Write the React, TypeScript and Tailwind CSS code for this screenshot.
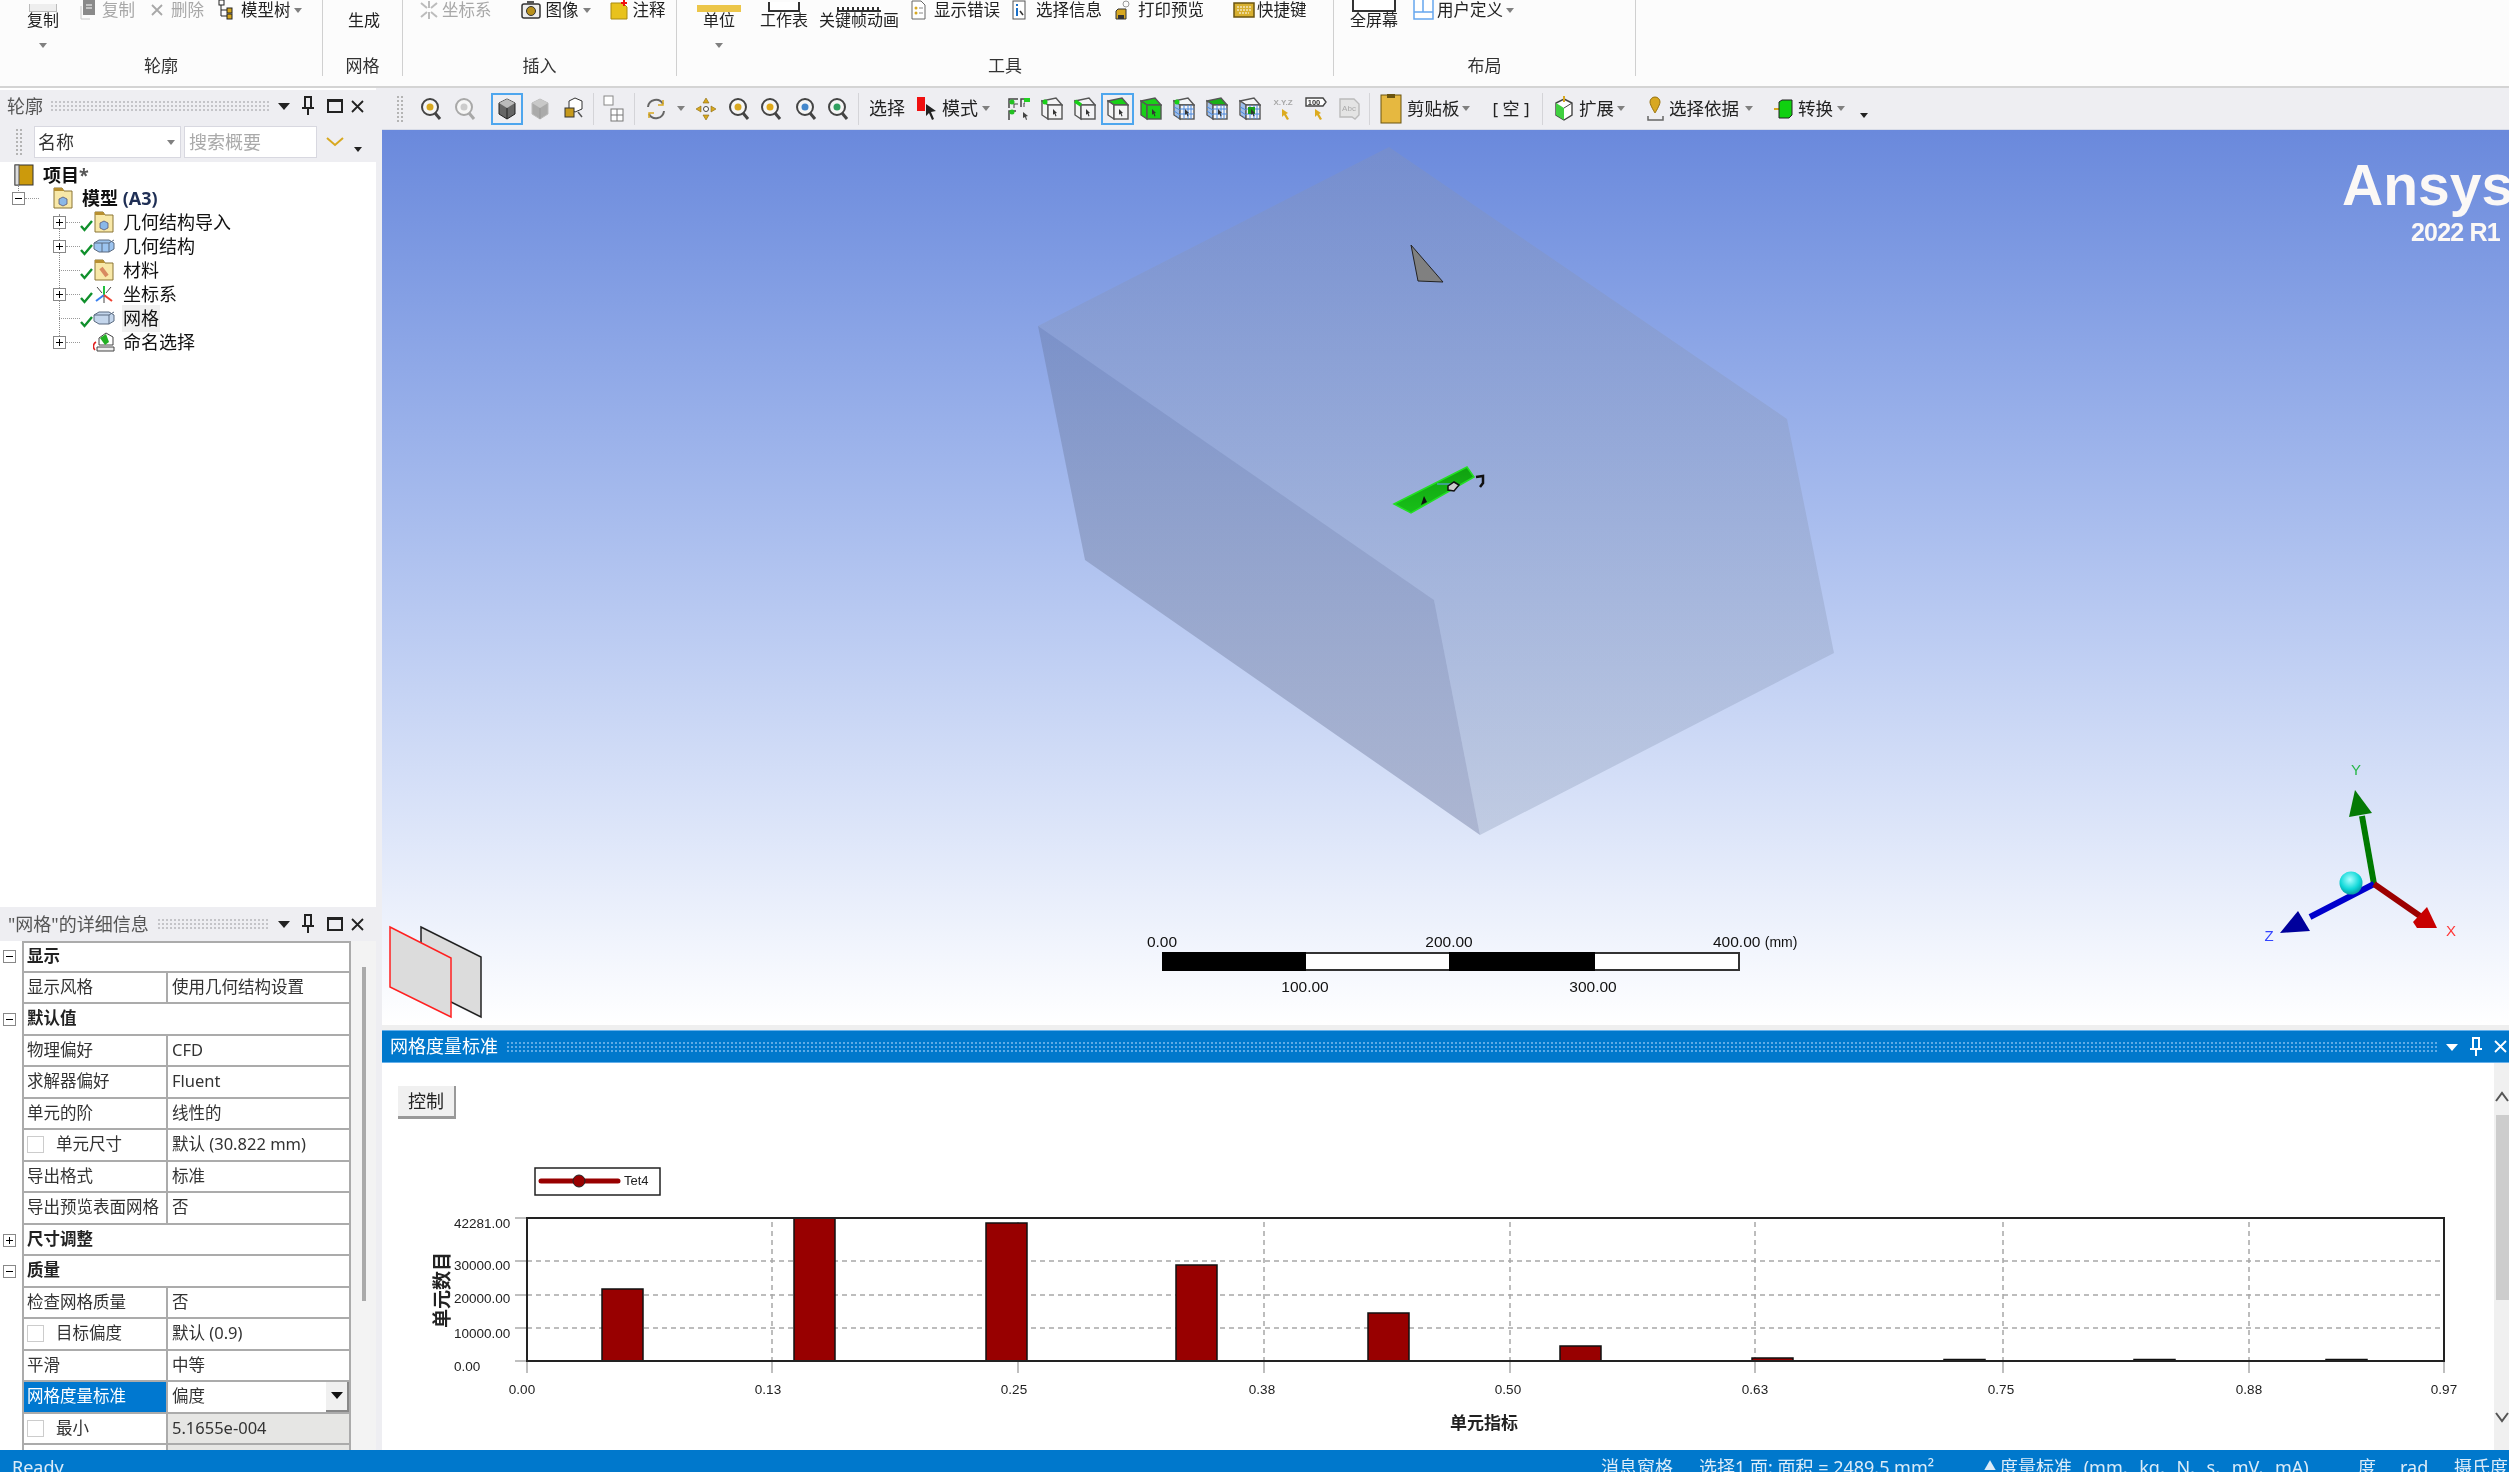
import type { ReactNode } from "react";

const Caret = ({ dark }: { dark?: boolean }) => (
  <span className={`inline-block h-0 w-0 border-x-[4px] border-t-[5px] border-x-transparent ${dark ? "border-t-[#222]" : "border-t-[#808080]"}`} />
);

function Svg({ w, h = 20, children }: { w: number; h?: number; children: ReactNode }) {
  return (
    <svg width={w} height={h} viewBox={`0 0 ${w} ${h}`} className="shrink-0">
      {children}
    </svg>
  );
}

// ribbon icons
const CopyIcon = () => (
  <Svg w={16}>
    <rect x="3" y="0" width="12" height="15" fill="#8a8a8a" />
    <path d="M1 6v13h9" fill="none" stroke="#c8c8c8" />
    <path d="M6 5h6M6 8h6" stroke="#fff" />
  </Svg>
);
const CrossIcon = ({ color = "#a8a8a8", size = 12 }: { color?: string; size?: number }) => (
  <Svg w={size} h={size}>
    <path d={`M1 1L${size - 1} ${size - 1}M${size - 1} 1L1 ${size - 1}`} stroke={color} strokeWidth="1.8" />
  </Svg>
);
const TreeIcon = () => (
  <Svg w={16}>
    <rect x="1" y="0" width="5" height="5" fill="#fff" stroke="#222" />
    <rect x="9" y="8" width="5" height="5" fill="#d6a71c" stroke="#222" />
    <rect x="9" y="14" width="5" height="5" fill="#d6a71c" stroke="#222" />
    <path d="M3 5v5h6M3 10v6h6" fill="none" stroke="#222" />
  </Svg>
);
const AxisIcon = () => (
  <Svg w={18}>
    <path d="M9 1v7M9 12v7M1 3l6 5M17 3l-6 5M1 17l6-5M17 17l-6-5" stroke="#bcbcbc" strokeWidth="2" />
  </Svg>
);
const CameraIcon = () => (
  <Svg w={20}>
    <rect x="1" y="4" width="18" height="14" rx="2" fill="#eee" stroke="#333" strokeWidth="1.5" />
    <circle cx="10" cy="11" r="4.5" fill="#b8901c" stroke="#333" />
    <rect x="6" y="1" width="7" height="3" fill="#555" />
  </Svg>
);
const NoteIcon = () => (
  <Svg w={20}>
    <path d="M2 3h12l4 4v12H2z" fill="#e8c21c" stroke="#a88a10" />
    <path d="M15 0v6M12 3h6" stroke="#f01010" strokeWidth="2" />
  </Svg>
);
const DocIcon = () => (
  <Svg w={15}>
    <path d="M1 1h9l4 4v14H1z" fill="#fff" stroke="#666" />
    <circle cx="5" cy="8" r="1.5" fill="#d8a820" />
    <circle cx="5" cy="13" r="1.5" fill="#d8a820" />
    <path d="M8 8h4M8 13h4" stroke="#888" />
  </Svg>
);
const InfoIcon = () => (
  <Svg w={14}>
    <rect x="1" y="1" width="12" height="18" fill="#fff" stroke="#555" />
    <rect x="4" y="4" width="2" height="2" fill="#1a70c8" />
    <rect x="4" y="8" width="2" height="8" fill="#1a70c8" />
    <path d="M8 11l3 4" stroke="#333" strokeWidth="1.5" />
  </Svg>
);
const PrintIcon = () => (
  <Svg w={16}>
    <circle cx="11" cy="4" r="3" fill="none" stroke="#999" />
    <path d="M3 9h8v10H1V11z" fill="#d8a820" stroke="#333" />
    <rect x="3" y="15" width="6" height="4" fill="#333" />
  </Svg>
);
const KeysIcon = () => (
  <Svg w={22}>
    <rect x="1" y="3" width="20" height="14" fill="#d8b030" stroke="#6a5410" strokeWidth="1.5" />
    <path d="M4 7h14M4 10h14M6 13h10" stroke="#fff" strokeDasharray="2 1" />
  </Svg>
);
const LayoutIcon = () => (
  <Svg w={21}>
    <path d="M1 0v19h19V0M1 12h19M10 0v12" fill="#fff" stroke="#66a6ee" strokeWidth="1.5" />
  </Svg>
);

// toolbar icons
const Glass = ({ dot = "#d8a820", faded }: { dot?: string; faded?: boolean }) => (
  <Svg w={22} h={24}>
    <circle cx="10" cy="10" r="8" fill="#f6f6f6" stroke={faded ? "#a8a8a8" : "#444"} strokeWidth="2" />
    <path d="M15 16l5 6" stroke={faded ? "#a8a8a8" : "#444"} strokeWidth="3" />
    <circle cx="10" cy="10" r="3.5" fill={dot} />
  </Svg>
);
const SolidCube = ({ light }: { light?: boolean }) => (
  <Svg w={20} h={24}>
    <path d="M10 2l8 4v11l-8 5-8-5V6z" fill={light ? "#aaa" : "#666"} stroke={light ? "#bbb" : "#222"} />
    <path d="M10 2l8 4-8 5-8-5z" fill={light ? "#c8c8c8" : "#bbb"} />
    <path d="M10 11v11" stroke={light ? "#999" : "#222"} />
  </Svg>
);
const MultiCube = () => (
  <Svg w={22} h={24}>
    <path d="M12 1l7 3v8l-7 3-6-3V4z" fill="#fff" stroke="#333" />
    <rect x="2" y="11" width="9" height="9" fill="#c79a1c" stroke="#333" />
    <path d="M15 15l4 5" stroke="#555" strokeWidth="1.5" />
  </Svg>
);
const SplitIcon = () => (
  <Svg w={22} h={28}>
    <rect x="1" y="1" width="9" height="9" fill="#fff" stroke="#888" />
    <rect x="8" y="14" width="12" height="12" fill="#fff" stroke="#777" />
    <path d="M14 14v12M8 20h12" stroke="#777" />
  </Svg>
);
const RotateIcon = () => (
  <Svg w={22} h={24}>
    <path d="M3 10a8 8 0 0 1 15-3M19 14a8 8 0 0 1-15 3" fill="none" stroke="#666" strokeWidth="2" />
    <path d="M18 3v5h-5M4 21v-5h5" fill="none" stroke="#d8a820" strokeWidth="1.5" />
  </Svg>
);
const PanIcon = () => (
  <Svg w={22} h={24}>
    <path d="M11 1l3 5H8zM11 23l-3-5h6zM1 12l5-3v6zM21 12l-5 3V9z" fill="#d8a820" stroke="#8a6a10" strokeWidth=".6" />
    <circle cx="11" cy="12" r="2.5" fill="#fff" stroke="#444" />
  </Svg>
);
const PointerIcon = () => (
  <Svg w={22} h={24}>
    <rect x="0" y="0" width="8" height="14" fill="#f01010" />
    <path d="M9 7l10 7-5 1 3 7-2 1-3-7-3 3z" fill="#222" />
  </Svg>
);
const NodesIcon = () => (
  <Svg w={24} h={24}>
    <path d="M2 11V2h9M14 10V2h8M2 23v-9h7" fill="none" stroke="#444" strokeWidth="1.5" />
    <path d="M7 11V7h4M18 6h-1v4" fill="none" stroke="#444" />
    <circle cx="5" cy="5" r="2.5" fill="#22c022" />
    <rect x="17" y="1" width="6" height="4" fill="#22d022" />
    <circle cx="5" cy="15" r="2.5" fill="#22c022" />
    <path d="M16 15l5 4-2 .5 1 3-1 .5-1-3-2 1z" fill="#444" />
  </Svg>
);
// front face on the right, side panel on the left, top slanting back
const SelBox = ({ top = "#f4f4f6", front = "#f4f4f6", side = "#f4f4f6", grid, vertex, edge, cells }: { top?: string; front?: string; side?: string; grid?: boolean; vertex?: boolean; edge?: boolean; cells?: boolean }) => (
  <Svg w={22} h={24}>
    <polygon points="1,4 15,1 21,8 7,8" fill={top} stroke="#555" strokeWidth="1.4" />
    <polygon points="1,4 7,8 7,22 1,18" fill={side} stroke="#555" strokeWidth="1.4" />
    <rect x="7" y="8" width="14" height="14" fill={front} stroke="#555" strokeWidth="1.4" />
    {grid && <path d="M3 6v13M5 7v14M11 8v14M15 8v14M18 8v14M7 12h14M7 17h14M1 10l6 3M1 14l6 4" stroke="#4a88dc" strokeWidth="1" />}
    {vertex && <circle cx="4" cy="5" r="2.5" fill="#18d018" />}
    {edge && <path d="M1 4l6 4" stroke="#18d018" strokeWidth="3.5" />}
    {cells && <rect x="9" y="10" width="7" height="7" fill="#18a018" />}
    <path d="M12 12l4 4-1.5.3 1 2.7-1 .5-1-2.7-1.5 1z" fill="#333" />
  </Svg>
);
const XyzIcon = () => (
  <Svg w={26} h={24}>
    <text x="13" y="8" textAnchor="middle" fontFamily="'Liberation Sans', sans-serif" fontSize="8" fontWeight="700" fill="#a8a8a8">X.Y.Z</text>
    <path d="M12 12l6 4-2 1 3 5-2 1-3-5-2 2z" fill="#dcab20" />
  </Svg>
);
const TagIcon = () => (
  <Svg w={22} h={24}>
    <path d="M1 1h17l3 4-3 4H1z" fill="#fff" stroke="#444" strokeWidth="1.4" />
    <text x="9" y="8" textAnchor="middle" fontFamily="'Liberation Sans', sans-serif" fontSize="7.5" fontWeight="700" fill="#333">100</text>
    <path d="M10 12l6 4-2 1 3 5-2 1-3-5-2 2z" fill="#dcab20" />
  </Svg>
);
const FadedTagIcon = () => (
  <Svg w={22} h={24}>
    <path d="M2 2h14l5 5v11l-4 4-3-2H2z" fill="#e4e4e4" stroke="#bbb" strokeWidth="1.4" />
    <text x="11" y="14" textAnchor="middle" fontFamily="'Liberation Sans', sans-serif" fontSize="8" fill="#aaa">Abc</text>
  </Svg>
);
const ClipIcon = () => (
  <Svg w={22} h={30}>
    <rect x="1" y="1" width="20" height="28" fill="#e6b840" stroke="#6a5410" />
    <rect x="7" y="0" width="8" height="4" fill="#6a5410" />
  </Svg>
);
const ExtendIcon = () => (
  <Svg w={20} h={26}>
    <path d="M10 3l8 4v12l-8 5-8-5V7z" fill="#fff" stroke="#444" strokeWidth="1.4" />
    <path d="M2 7l8 5v12l-8-5z" fill="#40d040" />
    <path d="M10 12l8-5" stroke="#444" />
    <path d="M10 0v6" stroke="#d8a820" strokeWidth="2" />
  </Svg>
);
const GeoIcon = () => (
  <Svg w={19} h={26}>
    <path d="M9 1a5 5 0 0 1 5 5c0 3-5 11-5 11S4 9 4 6a5 5 0 0 1 5-5z" fill="#d8a820" stroke="#96700c" />
    <path d="M2 20v4h15v-4" fill="none" stroke="#666" strokeWidth="1.5" />
  </Svg>
);
const ConvertIcon = () => (
  <Svg w={19}>
    <path d="M0 10h5" stroke="#d8a820" strokeWidth="2" />
    <path d="M5 3l3-2h10v15l-3 3H5z" fill="#10d010" stroke="#222" />
  </Svg>
);

// tree icons
const BookIcon = () => (
  <Svg w={20} h={22}>
    <rect x="1" y="1" width="18" height="20" fill="#cc9a0c" stroke="#333" />
    <rect x="1" y="1" width="4" height="20" fill="#ddd" stroke="#555" />
  </Svg>
);
const FolderIcon = ({ inner }: { inner: ReactNode }) => (
  <Svg w={20} h={22}>
    <path d="M1 1h8l2 3h8v17H1z" fill="#f8e8a8" stroke="#8a7434" />
    <path d="M1 1h8l2 3H1z" fill="#b89030" />
    {inner}
  </Svg>
);
const BlueCube = <path d="M6 12l4-2 4 2v5l-4 2-4-2z" fill="#8ab8e8" stroke="#557" strokeWidth=".8" />;
const TwoBlocks = ({ two }: { two?: boolean }) => (
  <Svg w={22} h={18}>
    <path d="M1 6l5-3h10l5 3v6l-5 3H6l-5-3z" fill={two ? "#9cc4f0" : "#c4d6ec"} stroke="#5a6a80" />
    <path d="M1 6h15l5-3M16 6v9" fill="none" stroke="#5a6a80" />
    {two && <path d="M9 6v9" stroke="#5a6a80" />}
  </Svg>
);
const CsIcon = () => (
  <Svg w={20} h={20}>
    <path d="M10 11V2" stroke="#20c040" strokeWidth="2" />
    <path d="M10 11L2 17" stroke="#3a80f0" strokeWidth="2" />
    <path d="M10 11l8 6" stroke="#f04030" strokeWidth="2" />
    <path d="M3 3l5 6M17 3l-5 6M10 12v7" stroke="#444" />
  </Svg>
);
const NamedIcon = () => (
  <Svg w={22} h={20}>
    <path d="M6 6l7-5 7 4v8H6z" fill="#fff" stroke="#444" />
    <path d="M7 6l6-4 3 8-4 3z" fill="#22b022" />
    <path d="M2 18a5 5 0 0 1 1-8" fill="none" stroke="#e02020" strokeWidth="1.6" />
    <path d="M4 15h17v4H4z" fill="#eee" stroke="#444" />
  </Svg>
);
const Check = () => (
  <svg width="13" height="13" viewBox="0 0 13 13" className="shrink-0">
    <path d="M1 7l3.5 4L12 2" fill="none" stroke="#10902c" strokeWidth="2.4" />
  </svg>
);
const Expander = ({ open }: { open?: boolean }) => (
  <span className="relative block h-[13px] w-[13px] shrink-0 border border-[#888] bg-white">
    <span className="absolute left-[2px] right-[2px] top-[5px] h-px bg-black" />
    {!open && <span className="absolute bottom-[2px] left-[5px] top-[2px] w-px bg-black" />}
  </span>
);

function Large({ label, ml, icon, caret }: { label: string; ml: string; icon?: ReactNode; caret?: boolean }) {
  return (
    <div className={`flex flex-col items-center ${ml}`}>
      <div className="flex h-[12px] items-end overflow-hidden">{icon}</div>
      <span className="whitespace-nowrap text-[16px] leading-[17px]">{label}</span>
      {caret && (
        <span className="mt-[14px] flex">
          <Caret />
        </span>
      )}
    </div>
  );
}

function Small({ label, ml, icon, gap, gray, caret }: { label: string; ml: string; icon: ReactNode; gap: string; gray?: boolean; caret?: string }) {
  return (
    <div className={`flex h-[20px] items-center ${ml}`}>
      {icon}
      <span className={`whitespace-nowrap text-[16.5px] leading-[20px] ${gap} ${gray ? "text-[#a8a8a8]" : ""}`}>{label}</span>
      {caret && (
        <span className={`flex ${caret}`}>
          <Caret />
        </span>
      )}
    </div>
  );
}

function Group({ label, width, children }: { label: string; width: string; children: ReactNode }) {
  return (
    <div className={`flex h-[76px] shrink-0 flex-col border-r border-[#d0d0d0] ${width}`}>
      <div className="flex h-[56px] items-start">{children}</div>
      <div className="text-center text-[17px] leading-[20px] text-[#333]">{label}</div>
    </div>
  );
}

const largeTop = (w: string, h: string) => (
  <span className={`block border-x-2 border-b-2 border-[#333] bg-white ${w} ${h}`} />
);

function Ribbon() {
  return (
    <div className="flex h-[86px] shrink-0 bg-[#fcfcfc] text-[#222]">
      <Group label="轮廓" width="w-[323px]">
        <Large label="复制" ml="ml-[27px]" caret icon={<span className="block h-[8px] w-[28px] border-x border-b border-[#bbb] bg-[#eee]" />} />
        <Small label="复制" ml="ml-[21px]" gap="ml-[6px] text-[#a8a8a8]" icon={<CopyIcon />} />
        <Small label="删除" ml="ml-[16px]" gap="ml-[8px] text-[#a8a8a8]" icon={<CrossIcon />} />
        <Small label="模型树" ml="ml-[14px]" gap="ml-[7px]" icon={<TreeIcon />} caret="ml-[3px]" />
      </Group>
      <Group label="网格" width="w-[80px]">
        <Large label="生成" ml="ml-[25px]" icon={<span className="mr-[-6px] block h-[6px] w-[4px] rotate-[25deg] bg-[#555]" />} />
      </Group>
      <Group label="插入" width="w-[274px]">
        <Small label="坐标系" ml="ml-[17px]" gap="ml-[4px]" gray icon={<AxisIcon />} />
        <Small label="图像" ml="ml-[29px]" gap="ml-[5px]" icon={<CameraIcon />} caret="ml-[4px]" />
        <Small label="注释" ml="ml-[18px]" gap="ml-[4px]" icon={<NoteIcon />} />
      </Group>
      <Group label="工具" width="w-[657px]">
        <Large label="单位" ml="ml-[20px]" caret icon={<span className="block h-[7px] w-[44px] bg-[#ecc64a]" />} />
        <Large label="工作表" ml="ml-[19px]" icon={largeTop("w-[32px]", "h-[10px]")} />
        <Large label="关键帧动画" ml="ml-[11px]" icon={<span className="block h-[5px] w-[44px] border-b-2 border-[#333] bg-[repeating-linear-gradient(90deg,#333_0_2px,#fff_2px_5px)]" />} />
        <Small label="显示错误" ml="ml-[12px]" gap="ml-[8px]" icon={<DocIcon />} />
        <Small label="选择信息" ml="ml-[12px]" gap="ml-[10px]" icon={<InfoIcon />} />
        <Small label="打印预览" ml="ml-[13px]" gap="ml-[7px]" icon={<PrintIcon />} />
        <Small label="快捷键" ml="ml-[29px]" gap="ml-[2px]" icon={<KeysIcon />} />
      </Group>
      <Group label="布局" width="w-[302px]">
        <Large label="全屏幕" ml="ml-[16px]" icon={largeTop("w-[44px]", "h-[12px]")} />
        <Small label="用户定义" ml="ml-[15px]" gap="ml-[3px]" icon={<LayoutIcon />} caret="ml-[3px]" />
      </Group>
    </div>
  );
}

const Grip = () => (
  <span className="block h-[28px] w-[8px] bg-[radial-gradient(#b4b4b4_1px,transparent_1px)] bg-[length:4px_4px]" />
);
const Sep = ({ ml = "" }: { ml?: string }) => <span className={`block h-[32px] w-px shrink-0 bg-[#d4d4d8] ${ml}`} />;
const Cell = ({ w = "w-[33px]", active, ml = "", children }: { w?: string; active?: boolean; ml?: string; children: ReactNode }) => (
  <span className={`flex h-[32px] shrink-0 items-center justify-center ${w} ${ml} ${active ? "border-2 border-[#4ea6ee]" : ""}`}>{children}</span>
);

function Toolbar() {
  return (
    <div className="flex h-[42px] shrink-0 items-center border-b border-[#d8dce8] bg-[#eeeef2] pl-[14px] text-[17px] text-[#222]">
      <Grip />
      <Cell w="w-[34px]" ml="ml-[10px]"><Glass /></Cell>
      <Cell><Glass faded dot="#ccc" /></Cell>
      <Cell w="w-[32px]" ml="ml-[10px]" active><SolidCube /></Cell>
      <Cell w="w-[34px]"><SolidCube light /></Cell>
      <Cell w="w-[34px]"><MultiCube /></Cell>
      <Sep ml="ml-[2px]" />
      <Cell w="w-[40px]"><SplitIcon /></Cell>
      <Sep />
      <Cell w="w-[42px]"><RotateIcon /></Cell>
      <Cell w="w-[8px]"><Caret /></Cell>
      <Cell w="w-[42px]"><PanIcon /></Cell>
      <Cell w="w-[24px]"><Glass /></Cell>
      <Cell w="w-[40px]"><Glass dot="#e0a818" /></Cell>
      <Cell w="w-[30px]"><Glass dot="#4488cc" /></Cell>
      <Cell w="w-[34px]"><Glass dot="#30a060" /></Cell>
      <Sep ml="ml-[3px]" />
      <span className="ml-[10px] w-[36px] whitespace-nowrap text-[18px]">选择</span>
      <span className="ml-[12px] flex"><PointerIcon /></span>
      <span className="ml-[3px] w-[36px] whitespace-nowrap text-[18px]">模式</span>
      <span className="ml-[4px] flex"><Caret /></span>
      <Cell ml="ml-[12px]"><NodesIcon /></Cell>
      <Cell><SelBox vertex /></Cell>
      <Cell><SelBox edge /></Cell>
      <Cell active><SelBox top="#18d018" /></Cell>
      <Cell><SelBox top="#18d018" front="#18d018" side="#18d018" /></Cell>
      <Cell><SelBox grid vertex /></Cell>
      <Cell><SelBox grid top="#18b018" /></Cell>
      <Cell><SelBox grid cells /></Cell>
      <Cell><XyzIcon /></Cell>
      <Cell><TagIcon /></Cell>
      <Cell><FadedTagIcon /></Cell>
      <Sep ml="ml-[4px]" />
      <span className="ml-[10px] flex"><ClipIcon /></span>
      <span className="ml-[5px] w-[52px] whitespace-nowrap text-[17.5px]">剪贴板</span>
      <span className="ml-[3px] flex"><Caret /></span>
      <span className="ml-[21px] w-[40px] whitespace-nowrap text-center">[ 空 ]</span>
      <Sep ml="ml-[11px]" />
      <span className="ml-[11px] flex"><ExtendIcon /></span>
      <span className="ml-[5px] w-[35px] whitespace-nowrap text-[17.5px]">扩展</span>
      <span className="ml-[3px] flex"><Caret /></span>
      <span className="ml-[21px] flex"><GeoIcon /></span>
      <span className="ml-[4px] w-[70px] whitespace-nowrap text-[17.5px]">选择依据</span>
      <span className="ml-[6px] flex"><Caret /></span>
      <span className="ml-[21px] flex"><ConvertIcon /></span>
      <span className="ml-[5px] w-[35px] whitespace-nowrap text-[17.5px]">转换</span>
      <span className="ml-[4px] flex"><Caret /></span>
      <span className="ml-[15px] mt-[14px] flex"><Caret dark /></span>
    </div>
  );
}

function PanelControls({ light }: { light?: boolean }) {
  const c = light ? "#ffffff" : "#222222";
  return (
    <div className="flex shrink-0 items-center">
      <svg width="12" height="8" viewBox="0 0 12 8"><path d="M0 1h12L6 8z" fill={c} /></svg>
      <svg width="12" height="20" viewBox="0 0 12 20" className="ml-[12px]">
        <path d="M3 1h6v11H3zM0 12h12M6 12v7" fill="none" stroke={c} strokeWidth="2" />
      </svg>
      {!light && (
        <span className="ml-[13px] block h-[14px] w-[16px] border-2 border-t-[3px] border-[#222]" />
      )}
      <span className={light ? "ml-[12px] flex" : "ml-[8px] flex"}>
        <CrossIcon color={c} size={13} />
      </span>
    </div>
  );
}

const Dots = ({ light }: { light?: boolean }) => (
  <span className={`block h-[12px] min-w-0 flex-1 bg-[length:4px_4px] ${light ? "bg-[radial-gradient(#5fabe6_1px,transparent_1px)]" : "bg-[radial-gradient(#c4c4c8_1px,transparent_1px)]"}`} />
);

function TreeRow({ label, icon, check, expander, pl = "pl-[53px]", selected, bold }: { label: ReactNode; icon: ReactNode; check?: boolean; expander?: "plus" | "minus"; pl?: string; selected?: boolean; bold?: boolean }) {
  return (
    <div className={`flex h-[24px] items-center text-[18px] text-[#111] ${pl}`}>
      <span className="w-[13px] shrink-0">{expander && <Expander open={expander === "minus"} />}</span>
      <span className={`block w-[14px] shrink-0 border-t border-dotted border-[#999] ${expander ? "" : "ml-[-7px] w-[21px]"}`} />
      <span className="w-[13px] shrink-0 pt-[6px]">{check && <Check />}</span>
      <span className="flex w-[22px] shrink-0 justify-center">{icon}</span>
      <span className={`ml-[7px] whitespace-nowrap px-[1px] ${selected ? "bg-[#f0f0f0]" : ""} ${bold ? "font-bold" : ""}`}>{label}</span>
    </div>
  );
}

function Outline() {
  return (
    <div className="flex min-h-0 flex-1 flex-col bg-white">
      <div className="mt-[2px] flex h-[32px] shrink-0 items-center gap-[7px] bg-[#eeeef2] pl-[7px] pr-[12px] text-[18px] text-[#555]">
        <span>轮廓</span>
        <Dots />
        <PanelControls />
      </div>
      <div className="flex h-[40px] shrink-0 items-center bg-[#eeeef2] pl-[15px]">
        <Grip />
        <div className="ml-[11px] flex h-[32px] w-[147px] items-center justify-between border border-[#d8d8e0] bg-white px-[3px] pr-[5px] text-[18px] text-[#333]">
          名称
          <Caret />
        </div>
        <div className="ml-[3px] flex h-[32px] w-[133px] items-center border border-[#d8d8e0] bg-white px-[4px] text-[18px] text-[#aaa]">搜索概要</div>
        <svg width="18" height="10" viewBox="0 0 18 10" className="ml-[9px]"><path d="M1 1l8 7 8-7" fill="none" stroke="#d8a820" strokeWidth="2" /></svg>
        <span className="ml-[10px] mt-[14px] flex"><Caret dark /></span>
      </div>
      <div className="relative min-h-0 flex-1 pt-[2px]">
        <span className="absolute left-[59px] top-[52px] h-[126px] border-l border-dotted border-[#888]" />
        <span className="absolute left-[18px] top-[23px] h-[8px] border-l border-dotted border-[#888]" />
        <div className="flex h-[22px] items-center pl-[14px] text-[18px] font-bold text-[#111]">
          <BookIcon />
          <span className="ml-[9px]">项目<span className="text-[#555]">*</span></span>
        </div>
        <TreeRow pl="pl-[12px]" expander="minus" icon={<FolderIcon inner={BlueCube} />} bold label={<>模型 <span className="text-[#1f2f55]">(A3)</span></>} />
        <TreeRow expander="plus" check icon={<FolderIcon inner={BlueCube} />} label="几何结构导入" />
        <TreeRow expander="plus" check icon={<TwoBlocks two />} label="几何结构" />
        <TreeRow check icon={<FolderIcon inner={<path d="M7 9l6 8" stroke="#d88a60" strokeWidth="4" />} />} label="材料" />
        <TreeRow expander="plus" check icon={<CsIcon />} label="坐标系" />
        <TreeRow check selected icon={<TwoBlocks />} label="网格" />
        <TreeRow expander="plus" icon={<NamedIcon />} label="命名选择" />
      </div>
    </div>
  );
}

type Row =
  | { section: string; open: boolean }
  | { k: string; v: string; box?: boolean; selected?: boolean; gray?: boolean };

const rows: Row[] = [
  { section: "显示", open: true },
  { k: "显示风格", v: "使用几何结构设置" },
  { section: "默认值", open: true },
  { k: "物理偏好", v: "CFD" },
  { k: "求解器偏好", v: "Fluent" },
  { k: "单元的阶", v: "线性的" },
  { k: "单元尺寸", v: "默认 (30.822 mm)", box: true },
  { k: "导出格式", v: "标准" },
  { k: "导出预览表面网格", v: "否" },
  { section: "尺寸调整", open: false },
  { section: "质量", open: true },
  { k: "检查网格质量", v: "否" },
  { k: "目标偏度", v: "默认 (0.9)", box: true },
  { k: "平滑", v: "中等" },
  { k: "网格度量标准", v: "偏度", selected: true },
  { k: "最小", v: "5.1655e-004", box: true, gray: true },
  { k: "", v: "", box: true, gray: true },
];

function Details() {
  return (
    <div className="flex h-[545px] shrink-0 flex-col overflow-hidden bg-white pt-[2px]">
      <div className="flex h-[34px] shrink-0 items-center gap-[8px] bg-[#eeeef2] pl-[8px] pr-[12px] text-[18px] text-[#555]">
        <span className="whitespace-nowrap">"网格"的详细信息</span>
        <Dots />
        <PanelControls />
      </div>
      <div className="flex min-h-0 flex-1">
        <div className="min-h-0 w-[351px] shrink-0 overflow-hidden">
          {rows.map((r, i) => (
            <div key={i} className="flex h-[31.5px] items-center">
              <span className="flex w-[22px] shrink-0 justify-start pl-[3px]">
                {"section" in r && <Expander open={r.open} />}
              </span>
              {"section" in r ? (
                <div className={`flex h-full flex-1 items-center border-x-2 border-b-2 border-[#ababab] pl-[3px] text-[16.5px] font-bold text-[#222] ${i === 0 ? "border-t-2" : ""}`}>{r.section}</div>
              ) : (
                <div className="flex h-full flex-1 border-x-2 border-b-2 border-[#ababab] text-[16.5px] text-[#333]">
                  <div className={`flex w-[142px] shrink-0 items-center overflow-hidden whitespace-nowrap pl-[3px] ${r.selected ? "bg-[#0078d0] text-white" : ""}`}>
                    {r.box && <span className="mr-[12px] block h-[17px] w-[17px] shrink-0 border border-[#ccc] bg-white" />}
                    {r.k}
                  </div>
                  <div className={`flex flex-1 items-center border-l-2 border-[#ababab] pl-[4px] ${r.gray ? "bg-[#e6e6e4]" : ""}`}>
                    {r.v}
                    {r.selected && (
                      <span className="ml-auto flex h-full w-[23px] items-center justify-center border-b-2 border-r-2 border-[#888] bg-[#f0f0f0]">
                        <svg width="12" height="7" viewBox="0 0 12 7"><path d="M0 0h12L6 7z" fill="#111" /></svg>
                      </span>
                    )}
                  </div>
                </div>
              )}
            </div>
          ))}
        </div>
        <div className="flex-1 bg-[#f3f3f3] pl-[11px] pt-[26px]">
          <span className="block h-[334px] w-[4px] bg-[#aaaaaa]" />
        </div>
      </div>
    </div>
  );
}

function ModelView() {
  return (
    <svg width="2127" height="895" viewBox="382 130 2127 895" className="absolute inset-0">
      <defs>
        <radialGradient id="ball" cx="0.45" cy="0.35" r="0.7">
          <stop offset="0" stopColor="#a8ffff" />
          <stop offset="0.6" stopColor="#10d8d8" />
          <stop offset="1" stopColor="#088c98" />
        </radialGradient>
        <linearGradient id="shell" gradientUnits="userSpaceOnUse" x1="0" y1="147" x2="0" y2="835">
          <stop offset="0" stopColor="#969696" stopOpacity="0.2" />
          <stop offset="1" stopColor="#5a6e91" stopOpacity="0.22" />
        </linearGradient>
        <linearGradient id="side" gradientUnits="userSpaceOnUse" x1="0" y1="326" x2="0" y2="835">
          <stop offset="0" stopColor="#3c414b" stopOpacity="0.18" />
          <stop offset="1" stopColor="#394675" stopOpacity="0.3" />
        </linearGradient>
        <linearGradient id="part" x1="0" y1="0" x2="0" y2="1">
          <stop offset="0" stopColor="#10a010" />
          <stop offset="1" stopColor="#18c018" />
        </linearGradient>
      </defs>
      <polygon points="1389,147 1787,419 1834,653 1480,835 1434,600 1038,326" fill="url(#shell)" />
      <polygon points="1038,326 1434,600 1480,835 1085,560" fill="url(#side)" />
      <polygon points="1411,245 1443,282 1418,281" fill="#808080" stroke="#222" strokeWidth="1" />
      <polygon points="1394,504 1467,467 1474,477 1411,513" fill="url(#part)" stroke="#22e022" strokeWidth="1.5" />
      <path d="M1437,484 L1455,484" stroke="#5c9ce0" strokeWidth="1.2" />
      <path d="M1421,505l3-9 3 6z" fill="#111" />
      <path d="M1448,486l6-4 5 3-5 6-6-1z" fill="#ccc" stroke="#111" strokeWidth="1.5" />
      <path d="M1476,477l7-1 0 7-3 4" fill="none" stroke="#111" strokeWidth="2.5" />
      <text x="2342" y="205" fontFamily="'Liberation Sans', sans-serif" fontSize="57" fontWeight="700" fill="#fbf8f6">Ansys</text>
      <text x="2411" y="241" fontFamily="'Liberation Sans', sans-serif" fontSize="25" fontWeight="700" fill="#fbf8f6" letterSpacing="-0.8">2022 R1</text>
      <g fontFamily="'Liberation Sans', sans-serif" fontSize="15.5" fill="#111" textAnchor="middle">
        <text x="1162" y="947">0.00</text>
        <text x="1449" y="947">200.00</text>
        <text x="1713" y="947" textAnchor="start">400.00 <tspan fontSize="14">(mm)</tspan></text>
        <text x="1305" y="992">100.00</text>
        <text x="1593" y="992">300.00</text>
      </g>
      <rect x="1163" y="953" width="576" height="17" fill="#fff" stroke="#333" strokeWidth="2" />
      <rect x="1162" y="952" width="144" height="19" fill="#000" />
      <rect x="1449" y="952" width="146" height="19" fill="#000" />
      <polygon points="421,927 481,957 481,1017 421,987" fill="#dcdcdc" stroke="#222" strokeWidth="1.5" />
      <polygon points="390,927 451,958 451,1017 390,987" fill="#dcdcdc" stroke="#ff2020" strokeWidth="1.5" />
      <path d="M2374,884L2362,816" stroke="#007a00" strokeWidth="6" />
      <polygon points="2355,790 2372,813 2349,817" fill="#057a05" />
      <path d="M2374,884L2310,917" stroke="#0000cc" strokeWidth="6" />
      <polygon points="2280,933 2298,911 2310,931" fill="#00009c" />
      <path d="M2374,884L2420,916" stroke="#9c0000" strokeWidth="6" />
      <polygon points="2437,928 2427,907 2413,922 2417,928" fill="#c80000" />
      <circle cx="2351" cy="883" r="11.5" fill="url(#ball)" />
      <g fontFamily="'Liberation Sans', sans-serif" fontSize="15" textAnchor="middle">
        <text x="2356" y="775" fill="#28b848">Y</text>
        <text x="2269" y="941" fill="#3344ff">Z</text>
        <text x="2451" y="936" fill="#ff3838">X</text>
      </g>
    </svg>
  );
}

const bars = [
  [602, 1289], [794, 1218], [986, 1223], [1176, 1265], [1368, 1313],
  [1560, 1346], [1752, 1358], [1944, 1359.5], [2134, 1359.5], [2326, 1359.5],
];
const xTicks = [
  [527, "0.00", 522], [772, "0.13", 768], [1018, "0.25", 1014], [1264, "0.38", 1262], [1510, "0.50", 1508],
  [1755, "0.63", 1755], [2003, "0.75", 2001], [2249, "0.88", 2249], [2444, "0.97", 2444],
] as const;
const yTicks = [
  [1218, "42281.00", 1228], [1261, "30000.00", 1270], [1295, "20000.00", 1303], [1328, "10000.00", 1338], [1361, "0.00", 1371],
] as const;

function Chart() {
  return (
    <svg width="2112" height="300" viewBox="382 1150 2112 300" className="block">
      <g stroke="#aaa" strokeWidth="1.5">
        {yTicks.map(([y]) => (
          <line key={y} x1="515" x2="527" y1={y} y2={y} />
        ))}
        {xTicks.map(([x]) => (
          <line key={x} x1={x} x2={x} y1="1361" y2="1373" />
        ))}
      </g>
      <g stroke="#a8a8a8" strokeWidth="1.5" strokeDasharray="5 4">
        {yTicks.slice(1, 4).map(([y]) => (
          <line key={y} x1="527" x2="2444" y1={y} y2={y} />
        ))}
        {xTicks.slice(1, 8).map(([x]) => (
          <line key={x} x1={x} x2={x} y1="1222" y2="1361" />
        ))}
      </g>
      {bars.map(([x, y]) => (
        <rect key={x} x={x} y={y} width="41" height={1361 - y} fill="#980000" stroke="#111" strokeWidth="1.5" />
      ))}
      <rect x="527" y="1218" width="1917" height="143" fill="none" stroke="#222" strokeWidth="2" />
      <g fontFamily="'Liberation Sans', sans-serif" fontSize="13.5" fill="#222">
        {yTicks.map(([, t, ty]) => (
          <text key={t} x="454" y={ty}>{t}</text>
        ))}
        {xTicks.map(([x, t, lx]) => (
          <text key={t} x={lx} y="1394" textAnchor="middle">{t}</text>
        ))}
      </g>
      <g fontFamily="'Noto Sans CJK SC', sans-serif" fontWeight="700" fill="#222" textAnchor="middle">
        <text x="1484" y="1429" fontSize="17">单元指标</text>
        <text transform="translate(449 1290) rotate(-90)" fontSize="19">单元数目</text>
      </g>
      <rect x="535" y="1168" width="125" height="27" fill="#fff" stroke="#222" strokeWidth="1.5" />
      <line x1="541" x2="618" y1="1181" y2="1181" stroke="#980000" strokeWidth="5" strokeLinecap="round" />
      <circle cx="579" cy="1181" r="6" fill="#980000" stroke="#222" />
      <text x="624" y="1185" fontFamily="'Liberation Sans', sans-serif" fontSize="13" fill="#222">Tet4</text>
    </svg>
  );
}

export default function App() {
  return (
    <div className="flex h-[1472px] w-[2509px] flex-col overflow-hidden bg-white font-['Noto_Sans','Noto_Sans_CJK_SC',sans-serif] blur-[0.4px]">
      <Ribbon />
      <div className="h-[2px] shrink-0 bg-[#d4d4d4]" />
      <div className="flex min-h-0 flex-1">
        <div className="flex w-[376px] shrink-0 flex-col">
          <Outline />
          <Details />
        </div>
        <div className="w-[6px] shrink-0 bg-[#eeeef2]" />
        <div className="flex min-w-0 flex-1 flex-col">
          <Toolbar />
          <div className="relative h-[895px] shrink-0 bg-gradient-to-b from-[#6a89dc] to-white">
            <ModelView />
          </div>
          <div className="h-[5px] shrink-0 bg-[#efefef]" />
          <div className="flex h-[33px] shrink-0 items-center gap-[8px] border-y border-[#66b0ea] bg-[#0078cc] pl-[8px] pr-[2px] text-[18px] text-white">
            <span className="whitespace-nowrap">网格度量标准</span>
            <Dots light />
            <PanelControls light />
          </div>
          <div className="flex min-h-0 flex-1 bg-white">
            <div className="min-w-0 flex-1">
              <button className="ml-[16px] mt-[23px] block h-[33px] w-[58px] border-b-[3px] border-r-2 border-[#999] bg-[#f0f0f0] text-[18px] leading-[26px] text-[#222]">控制</button>
              <div className="mt-[31px]">
                <Chart />
              </div>
            </div>
            <div className="relative w-[15px] shrink-0 bg-[#f0f0f0]">
              <svg width="15" height="12" viewBox="0 0 15 12" className="absolute left-0 top-[28px]"><path d="M2 10l6-8 6 8" fill="none" stroke="#555" strokeWidth="2" /></svg>
              <span className="absolute left-[2px] right-0 top-[52px] h-[185px] bg-[#cdcdcd]" />
              <svg width="15" height="12" viewBox="0 0 15 12" className="absolute left-0 top-[348px]"><path d="M2 2l6 8 6-8" fill="none" stroke="#555" strokeWidth="2" /></svg>
            </div>
          </div>
        </div>
      </div>
      <div className="flex h-[22px] shrink-0 overflow-hidden whitespace-nowrap bg-[#0078cc] pt-[6px] text-[18px] leading-[22px] text-[#dcecf8]">
        <span className="ml-[12px] w-[1589px] shrink-0">Ready</span>
        <span className="w-[98px] shrink-0">消息窗格</span>
        <span className="w-[285px] shrink-0">选择1 面: 面积 = 2489.5 mm²</span>
        <span className="w-[16px] shrink-0 text-[12px]">▲</span>
        <span className="w-[358px] shrink-0 [word-spacing:7px]">度量标准 (mm, kg, N, s, mV, mA)</span>
        <span className="w-[42px] shrink-0">度</span>
        <span className="w-[54px] shrink-0">rad</span>
        <span className="shrink-0">摄氏度</span>
      </div>
    </div>
  );
}
